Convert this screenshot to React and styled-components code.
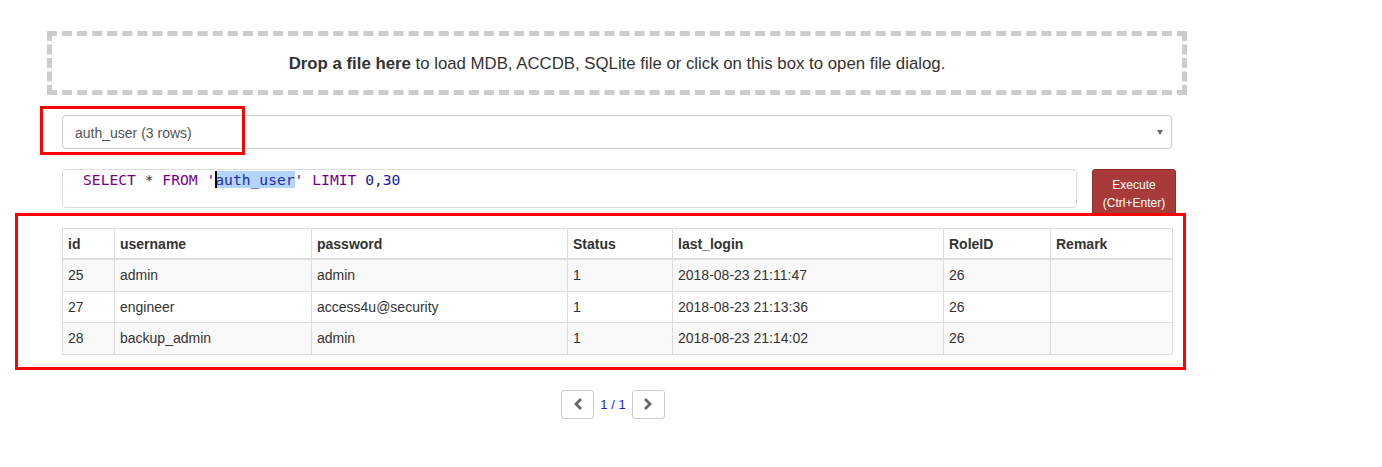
import React from "react";
import styled, { createGlobalStyle } from "styled-components";

const Global = createGlobalStyle`
  html, body { margin: 0; padding: 0; background: #fff; }
  body { font-family: "Liberation Sans", Arial, sans-serif; font-size: 14px; color: #333; }
`;

const Page = styled.div`
  position: relative;
  width: 1382px;
  height: 467px;
  overflow: hidden;
`;

const Container = styled.div`
  width: 1140px;
  margin-left: 47px;
  padding-top: 31px;
`;

const DropZone = styled.div`
  box-sizing: border-box;
  height: 64px;
  border: 5px dashed #ccc;
  display: flex;
  align-items: center;
  justify-content: center;
  font-size: 16.8px;
  color: #333;
  padding-top: 1px;
  b { font-weight: bold; }
`;

const Inner = styled.div`
  padding: 0 15px;
`;

const Select = styled.div`
  box-sizing: border-box;
  margin-top: 20px;
  height: 34px;
  border: 1px solid #ccc;
  border-radius: 4px;
  display: flex;
  align-items: center;
  justify-content: space-between;
  padding: 1px 8px 0 12px;
  color: #555;
  font-size: 14px;
`;

const Caret = styled.span`
  width: 0;
  height: 0;
  border-left: 3.5px solid transparent;
  border-right: 3.5px solid transparent;
  border-top: 5px solid #666;
  margin-top: 0;
`;

const SqlRow = styled.div`
  display: flex;
  gap: 15px;
  margin-top: 20px;
  margin-right: -4px;
  align-items: flex-start;
`;

const Editor = styled.div`
  box-sizing: border-box;
  flex: 0 0 1015px;
  height: 39px;
  border: 1px solid #ddd;
  border-radius: 4px;
  padding: 0 0 0 20px;
  font-family: "DejaVu Sans Mono", monospace;
  font-size: 14.65px;
  line-height: 20px;
  white-space: pre;
  color: #333;
`;

const Kw = styled.span`
  color: #770088;
`;
const Str = styled.span`
  color: #2a2aa6;
  background: #b3d4fc;
`;
const Num = styled.span`
  color: #1616b0;
`;
const Quote = styled.span`
  color: #770088;
`;
const Cursor = styled.span`
  display: inline-block;
  width: 2px;
  height: 17px;
  background: #000;
  vertical-align: -3px;
  margin-right: -2px;
  position: relative;
`;

const ExecButton = styled.button`
  box-sizing: border-box;
  width: 84px;
  height: 46px;
  background: #a83a3a;
  border: 1px solid #8e2b2b;
  border-radius: 3px;
  color: #fff;
  font-family: "Liberation Sans", Arial, sans-serif;
  font-size: 12px;
  line-height: 18px;
  padding: 6px 0 4px;
  text-align: center;
`;

const Table = styled.table`
  margin-top: 13px;
  width: 1110px;
  border-collapse: collapse;
  table-layout: fixed;
  font-size: 14px;
  color: #333;
`;

const Th = styled.th`
  text-align: left;
  font-weight: bold;
  border: 1px solid #ddd;
  border-bottom: 2px solid #ddd;
  padding: 5px 5px 4px;
  line-height: 20px;
`;

const Tr = styled.tr`
  background: ${(p) => (p.$odd ? "#f9f9f9" : "#fff")};
`;

const Td = styled.td`
  border: 1px solid #ddd;
  padding: 5px;
  line-height: 20.6px;
`;

const Pager = styled.div`
  display: flex;
  justify-content: center;
  align-items: center;
  gap: 6px;
  margin-top: 35px;
  padding-right: 8px;
`;

const PageBtn = styled.button`
  box-sizing: border-box;
  width: 33px;
  height: 29px;
  background: #fff;
  border: 1px solid #ccc;
  border-radius: 3px;
  display: flex;
  align-items: center;
  justify-content: center;
  padding: 0;
`;

const PageText = styled.span`
  color: #1a1aee;
  font-size: 13px;
`;

const Annotation = styled.div`
  position: absolute;
  box-sizing: border-box;
  border: 3px solid #ff0000;
  left: ${(p) => p.$x}px;
  top: ${(p) => p.$y}px;
  width: ${(p) => p.$w}px;
  height: ${(p) => p.$h}px;
  pointer-events: none;
`;

const Chevron = ({ dir }) => (
  <svg width="10" height="12" viewBox="0 0 10 12">
    <polyline
      points={dir === "left" ? "7,2 3,6 7,10" : "3,2 7,6 3,10"}
      fill="none"
      stroke="#666"
      strokeWidth="2.8"
      strokeLinecap="square"
    />
  </svg>
);

const cols = [
  ["id", 52],
  ["username", 197],
  ["password", 256],
  ["Status", 105],
  ["last_login", 271],
  ["RoleID", 107],
  ["Remark", 122],
];

const rows = [
  ["25", "admin", "admin", "1", "2018-08-23 21:11:47", "26", ""],
  ["27", "engineer", "access4u@security", "1", "2018-08-23 21:13:36", "26", ""],
  ["28", "backup_admin", "admin", "1", "2018-08-23 21:14:02", "26", ""],
];

export default function App() {
  return (
    <Page>
      <Global />
      <Container>
        <DropZone>
          <span>
            <b>Drop a file here</b> to load MDB, ACCDB, SQLite file or click on this box to open file dialog.
          </span>
        </DropZone>
        <Inner>
          <Select>
            <span>auth_user (3 rows)</span>
            <Caret />
          </Select>
          <SqlRow>
            <Editor>
              <Kw>SELECT</Kw> * <Kw>FROM</Kw> <Quote>'</Quote>
              <Cursor />
              <Str>auth_user</Str>
              <Quote>'</Quote> <Kw>LIMIT</Kw> <Num>0,30</Num>
            </Editor>
            <ExecButton>
              Execute
              <br />
              (Ctrl+Enter)
            </ExecButton>
          </SqlRow>
          <Table>
            <colgroup>
              {cols.map(([n, w]) => (
                <col key={n} style={{ width: w }} />
              ))}
            </colgroup>
            <thead>
              <tr>
                {cols.map(([n]) => (
                  <Th key={n}>{n}</Th>
                ))}
              </tr>
            </thead>
            <tbody>
              {rows.map((r, i) => (
                <Tr key={i} $odd={i % 2 === 0}>
                  {r.map((c, j) => (
                    <Td key={j}>{c}</Td>
                  ))}
                </Tr>
              ))}
            </tbody>
          </Table>
        </Inner>
        <Pager>
          <PageBtn>
            <Chevron dir="left" />
          </PageBtn>
          <PageText>1 / 1</PageText>
          <PageBtn>
            <Chevron dir="right" />
          </PageBtn>
        </Pager>
      </Container>
      <Annotation $x={40} $y={106} $w={205} $h={49} />
      <Annotation $x={15} $y={213} $w={1171} $h={157} />
    </Page>
  );
}
